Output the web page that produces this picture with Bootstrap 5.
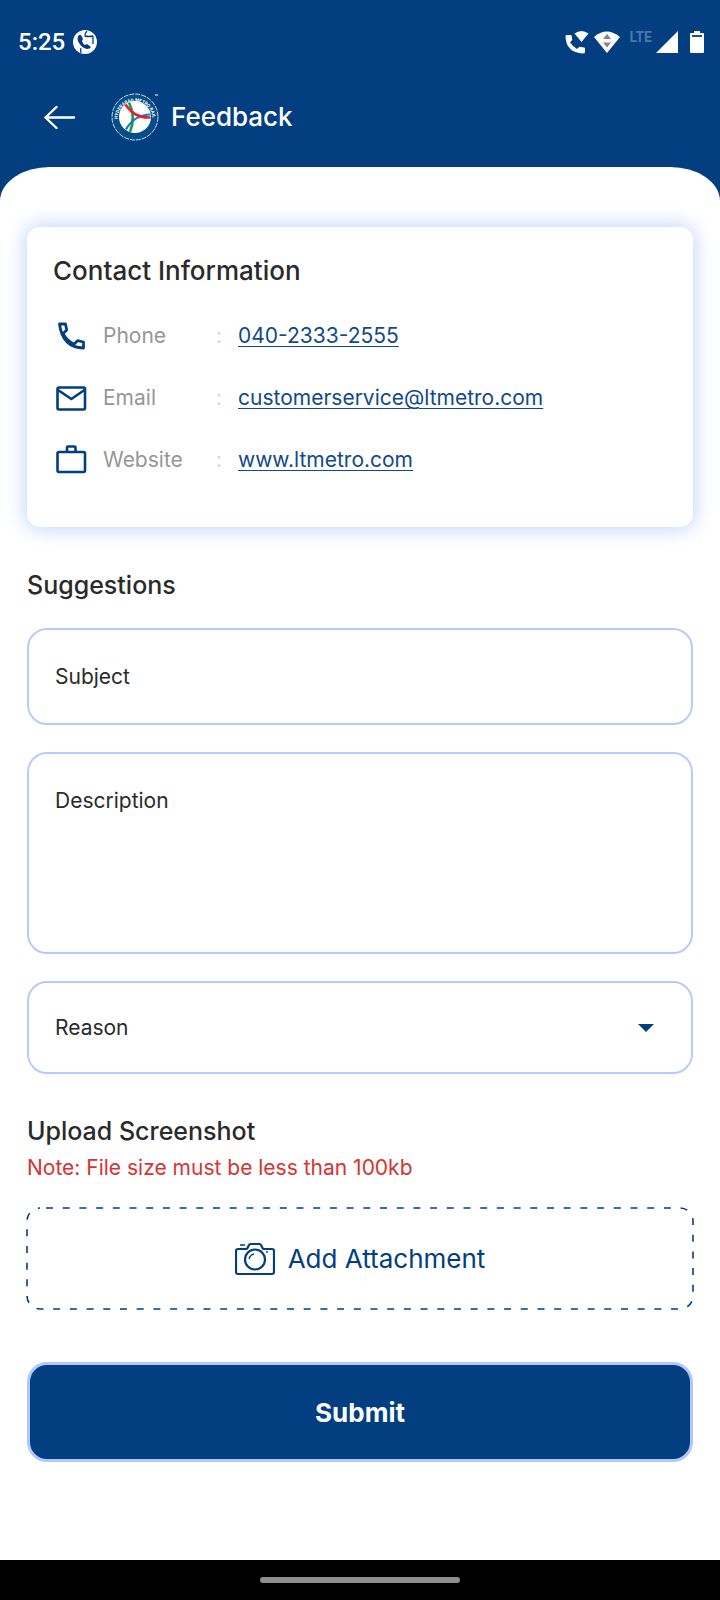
<!DOCTYPE html>
<html lang="en">
<head>
<meta charset="utf-8">
<meta name="viewport" content="width=device-width, initial-scale=1">
<title>Feedback</title>
<link rel="stylesheet" href="https://cdn.jsdelivr.net/npm/bootstrap@5.3.0/dist/css/bootstrap.min.css">
<style>
  :root { --navy: #023e80; --line: #b8cbff; --ink: #2a2a2a; }
  body { font-family: Inter, "Noto Sans", sans-serif; font-size: 21px; line-height: 32px; color: var(--ink); background: var(--navy); }
  svg { display: block; flex: none; }
  .status-bar { height: 84px; padding: 0 16px 0 18px; font-family: Roboto, sans-serif; font-size: 24px; font-weight: 500; }
  .lte-tag { font-size: 14px; line-height: 14px; font-weight: 700; color: #4c78a8; padding-bottom: 10px; }
  .app-bar { height: 83px; padding: 0 44px 18px; }
  .brand-logo { margin: 0 12px 0 35px; }
  .heading { font-size: 26px; line-height: 32px; font-weight: 500; margin: 0; }
  form .heading { font-size: 25px; }
  .sheet { background: #fff; border-radius: 50px 50px 0 0 / 34px 34px 0 0; padding: 60px 27px 94px; }
  .contact-card { border: 0; border-radius: 13px; padding: 28px 26px 36px; box-shadow: 0 0 20px 2px #c4d4ff; margin-bottom: 42px; }
  .contact-list { margin-top: 18px; }
  .contact-row { display: grid; grid-template-columns: 34px 97px 6px 1fr; column-gap: 16px; align-items: center; height: 62px; color: #969696; }
  .contact-row .sep { color: #d8d8d8; }
  .contact-row a { color: #12498a; text-decoration-thickness: 1px; text-underline-offset: 3px; }
  .form-floating { margin-bottom: 27px; }
  .form-floating > .field, .form-floating > .field:focus { border: 2px solid var(--line); border-radius: 20px; padding: 31px 27px 0; font-size: 21px; line-height: 32px; color: var(--ink); box-shadow: none; background-color: #fff; }
  .form-floating > label { padding: 32px 27px 0; color: var(--ink); }
  .form-floating > input.field { height: 97px; }
  .form-floating > textarea.field { height: 202px; resize: none; }
  .form-floating > select.field { height: 93px; background-image: url("data:image/svg+xml,%3Csvg xmlns='http://www.w3.org/2000/svg' viewBox='0 0 16 8'%3E%3Cpath fill='%23023e80' d='M0 0h16L8 8z'/%3E%3C/svg%3E"); background-size: 16px 8px; background-position: right 37px center; }
  .form-floating > select.field ~ label { padding-top: 30px; }
  .form-floating > select.field:invalid ~ label { transform: none; opacity: 1; }
  .section-start { margin-top: 27px; }
  .section-end { margin-bottom: 41px; }
  .note { color: #d63333; margin: 5px 0 24px; }
  .attach { height: 101px; color: var(--navy); font-size: 26px; margin-bottom: 53px; background: none; border: 0; gap: 13px; }
  .attach .dashes { inset: 0; overflow: visible; }
  .submit-btn, .submit-btn:hover { height: 100px; background: var(--navy); color: #fff; border: 3px solid #b0c7ff; border-radius: 20px; font-size: 26px; font-weight: 700; }
  .gesture-bar { height: 40px; background: #000; }
  .gesture-bar span { width: 200px; height: 6px; border-radius: 3px; background: #8f8f8f; }
</style>
</head>
<body>
<div class="d-flex flex-column min-vh-100">
  <header class="text-white">
    <div class="status-bar d-flex align-items-center">
      <span>5:25</span>
      <svg class="ms-2" width="24" height="24" viewBox="0 0 24 24" aria-hidden="true"><circle cx="12" cy="12" r="12" fill="#fff"/><path d="M6 5q-3 3 0 8t8 6q3 0 4-2l-4-3-2 1q-2-1-3-4l1-2-2-4z" fill="#023e80"/><path d="M14 1q-2 2-2 5 4 1 8 0M8 18q-1 2 0 5M20 6v8" fill="none" stroke="#023e80" stroke-width="1.300"/></svg>
      <div class="d-flex align-items-center ms-auto">
        <svg width="24" height="24" viewBox="0 0 24 24" aria-hidden="true"><path fill="#fff" d="M1.500 5h4q1 0 1.200 1l.6 4-2.300 2.300Q8 17 12 19l2.500-2.300 4.500.8q1 .2 1 1V22q0 1.500-2 1.500Q1 22.500.500 6.500.500 5 1.500 5zM9.500 3.500q7-5 14 0L16.500 12z"/></svg>
        <svg class="ms-1" width="28" height="24" viewBox="0 0 28 24" aria-hidden="true"><path fill="#fff" d="M1 7q12.500-11 26 0L14 23z"/><path fill="#858585" d="m14 4 4 5H10zM10 12.500h8l-4 5z"/></svg>
        <span class="lte-tag ms-1 ps-1">LTE</span>
        <svg class="ms-1" width="22" height="22" viewBox="0 0 22 22" aria-hidden="true"><path fill="#fff" d="M22 0v22H0z"/></svg>
        <svg class="ms-2 ps-1" width="18" height="22" viewBox="0 0 14 22" aria-hidden="true"><path fill="#fff" d="M4 0h6v2h3q1 0 1 1v18q0 1-1 1H1q-1 0-1-1V3q0-1 1-1h3z"/><path d="M2 5h10" stroke="#023e80" stroke-width="1.800"/></svg>
      </div>
    </div>
    <div class="app-bar d-flex align-items-center">
      <a href="#" aria-label="Back" class="text-white">
        <svg width="32" height="24" viewBox="0 0 32 24" fill="none" stroke="#fff" stroke-width="2.400" stroke-linecap="round" stroke-linejoin="round"><path d="M30 12.500H1.500M12.500 2l-11 10.500L12.500 23"/></svg>
      </a>
      <svg class="brand-logo" width="48" height="48" viewBox="0 0 48 48" role="img" aria-label="Hyderabad Metro Rail logo">
        <circle cx="24" cy="24" r="23" fill="#064e89" stroke="#fff" stroke-width=".8" stroke-dasharray="5 1"/>
        <circle cx="24" cy="24" r="16" fill="#fff"/>
        <path d="M18 9.500q7 14 1 29.500" fill="none" stroke="#14a04a" stroke-width="2.600"/>
        <path d="M15 36.500Q23 22 39.500 21.500" fill="none" stroke="#1878c0" stroke-width="2.200"/>
        <path d="M14.500 11.500q9 14 25 13" fill="none" stroke="#e3202c" stroke-width="2.400"/>
        <path id="ring" d="M6.500 26a17.500 17.500 0 1 1 35 0" fill="none"/>
        <text fill="#fff" font-family="Roboto" font-size="4.500" font-weight="700"><textPath href="#ring">HYDERABAD METRO RAIL</textPath></text>
        <path d="M44 2h3" stroke="#fff" stroke-width="1"/>
      </svg>
      <h1 class="heading">Feedback</h1>
    </div>
  </header>

  <main class="sheet flex-grow-1">
    <section class="card contact-card">
      <h2 class="heading">Contact Information</h2>
      <div class="contact-list">
        <div class="contact-row">
          <svg width="34" height="34" viewBox="0 0 34 34" fill="none" stroke="#023e80" stroke-width="2.800" stroke-linejoin="round" aria-hidden="true"><path d="M6.500 5h6l1.200 6-3.700 3.700Q13.500 21.500 21 25.200l3.500-3.500 6 1.300v6Q9.500 28.500 6.500 5z"/></svg>
          <span>Phone</span><span class="sep">:</span><span><a href="tel:040-2333-2555">040-2333-2555</a></span>
        </div>
        <div class="contact-row">
          <svg width="34" height="34" viewBox="0 0 34 34" fill="none" stroke="#023e80" stroke-width="2.600" stroke-linejoin="round" aria-hidden="true"><rect x="4.500" y="6.500" width="27.500" height="22" rx="1.500"/><path d="m5 9 13.300 9L31.500 9"/></svg>
          <span>Email</span><span class="sep">:</span><span><a href="mailto:customerservice@ltmetro.com">customerservice@ltmetro.com</a></span>
        </div>
        <div class="contact-row">
          <svg width="34" height="34" viewBox="0 0 34 34" fill="none" stroke="#023e80" stroke-width="2.600" stroke-linejoin="round" aria-hidden="true"><rect x="4.500" y="9" width="27.500" height="20" rx="1.500"/><path d="M14 9V4.500q0-1 1-1h6.500q1 0 1 1V9"/></svg>
          <span>Website</span><span class="sep">:</span><span><a href="http://www.ltmetro.com">www.ltmetro.com</a></span>
        </div>
      </div>
    </section>

    <form>
      <h2 class="heading">Suggestions</h2>
      <div class="form-floating section-start">
        <input class="form-control field" id="subject" type="text" placeholder=" ">
        <label for="subject">Subject</label>
      </div>
      <div class="form-floating">
        <textarea class="form-control field" id="description" placeholder=" "></textarea>
        <label for="description">Description</label>
      </div>
      <div class="form-floating section-end">
        <select class="form-select field" id="reason" required><option value="" selected></option></select>
        <label for="reason">Reason</label>
      </div>

      <h2 class="heading">Upload Screenshot</h2>
      <p class="note">Note: File size must be less than 100kb</p>
      <button type="button" class="attach position-relative w-100 d-flex align-items-center justify-content-center">
        <svg class="dashes position-absolute" width="100%" height="100%" aria-hidden="true"><rect width="100%" height="100%" rx="13" fill="none" stroke="#023e80" stroke-width="1.600" stroke-dasharray="7 9.700" stroke-dashoffset="-6"/></svg>
        <svg width="40" height="34" viewBox="0 0 40 34" fill="none" stroke="#023e80" stroke-width="2.200" stroke-linejoin="round" aria-hidden="true"><path d="M3 7h8q1 0 1.500-1L14 3q.5-1 1.500-1h9q1 0 1.500 1l1.500 3q.5 1 1.500 1h8q2 0 2 2v21q0 2-2 2H3q-2 0-2-2V9q0-2 2-2z"/><circle cx="20" cy="17.500" r="10"/><path d="M14 17q1-4 5-5M5 3h5M31 10h2" stroke-width="1.300"/></svg>
        <span>Add Attachment</span>
      </button>
      <button type="submit" class="btn submit-btn w-100">Submit</button>
    </form>
  </main>

  <footer class="gesture-bar d-flex align-items-center justify-content-center"><span></span></footer>
</div>
<script src="https://cdn.jsdelivr.net/npm/bootstrap@5.3.0/dist/js/bootstrap.bundle.min.js"></script>
</body>
</html>
